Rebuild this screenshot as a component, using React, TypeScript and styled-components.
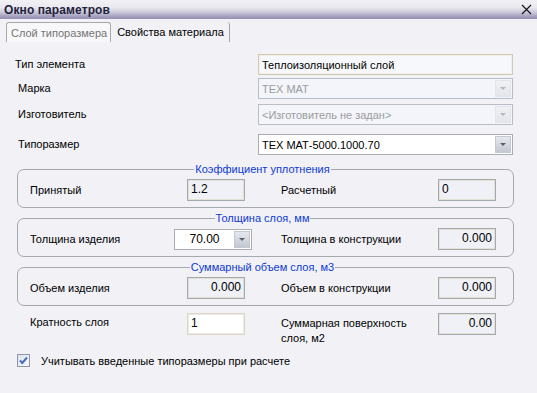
import styled, { createGlobalStyle } from "styled-components";

const GlobalStyle = createGlobalStyle`
  html, body {
    margin: 0;
    padding: 0;
  }
  body {
    background: #f1f1f6;
    font-family: "Liberation Sans", Arial, sans-serif;
    font-size: 11px;
    color: #000000;
  }
`;

type FieldKind = "name" | "disabled" | "combo" | "readonly" | "edit";

const App = () => {
  return (
    <SWindow>
      <GlobalStyle />
      <STitleBar>
        <STitle>Окно параметров</STitle>
        <SClose width="11" height="11" viewBox="0 0 11 11">
          <path d="M1 1 L10 10 M10 1 L1 10" stroke="#111" strokeWidth="1.1" />
        </SClose>
      </STitleBar>

      <STabs>
        <STab $active>Слой типоразмера</STab>
        <STab>Свойства материала</STab>
      </STabs>

      <SContent>
        <SFormRow $top={0}>
          <SLabel $indent={0}>Тип элемента</SLabel>
          <SField $kind="name">Теплоизоляционный слой</SField>
        </SFormRow>
        <SFormRow $top={3}>
          <SLabel $indent={3}>Марка</SLabel>
          <Combo kind="disabled" value="ТЕХ МАТ" />
        </SFormRow>
        <SFormRow $top={5}>
          <SLabel $indent={3}>Изготовитель</SLabel>
          <Combo kind="disabled" value="<Изготовитель не задан>" />
        </SFormRow>
        <SFormRow $top={9}>
          <SLabel $indent={3}>Типоразмер</SLabel>
          <Combo kind="combo" value="ТЕХ МАТ-5000.1000.70" />
        </SFormRow>

        <SGroup $top={8}>
          <SLegend>Коэффициент уплотнения</SLegend>
          <SGrid>
            <SCellLabel>Принятый</SCellLabel>
            <SSmallField $kind="readonly" $align="left">1.2</SSmallField>
            <SCellLabel>Расчетный</SCellLabel>
            <SSmallField $kind="readonly" $align="left">0</SSmallField>
          </SGrid>
        </SGroup>

        <SGroup $top={4}>
          <SLegend>Толщина слоя, мм</SLegend>
          <SGrid>
            <SCellLabel>Толщина изделия</SCellLabel>
            <SThickCombo>
              <SComboText $center>70.00</SComboText>
              <SComboButton $kind="combo">
                <SArrow $kind="combo" />
              </SComboButton>
            </SThickCombo>
            <SCellLabel>Толщина в конструкции</SCellLabel>
            <SSmallField $kind="readonly" $align="right">0.000</SSmallField>
          </SGrid>
        </SGroup>

        <SGroup $top={4}>
          <SLegend>Суммарный объем слоя, м3</SLegend>
          <SGrid>
            <SCellLabel>Объем изделия</SCellLabel>
            <SSmallField $kind="readonly" $align="right">0.000</SSmallField>
            <SCellLabel>Объем в конструкции</SCellLabel>
            <SSmallField $kind="readonly" $align="right">0.000</SSmallField>
          </SGrid>
        </SGroup>

        <SLooseGrid>
          <SCellLabel>Кратность слоя</SCellLabel>
          <SSmallField $kind="edit" $align="left">1</SSmallField>
          <STwoLineLabel>
            Суммарная поверхность
            <br />
            слоя, м2
          </STwoLineLabel>
          <SSmallField $kind="readonly" $align="right">0.00</SSmallField>
        </SLooseGrid>

        <SCheckRow>
          <SCheckBox>
            <svg width="11" height="11" viewBox="0 0 11 11">
              <path
                d="M2 5.5 L4.3 8 L9 2.5"
                stroke="#4a6cbd"
                strokeWidth="2"
                fill="none"
              />
            </svg>
          </SCheckBox>
          <span>Учитывать введенные типоразмеры при расчете</span>
        </SCheckRow>
      </SContent>
    </SWindow>
  );
};

const Combo = ({ kind, value }: { kind: FieldKind; value: string }) => (
  <SField $kind={kind}>
    <SComboText>{value}</SComboText>
    <SComboButton $kind={kind}>
      <SArrow $kind={kind} />
    </SComboButton>
  </SField>
);

export default App;

const fieldLook = (kind: FieldKind) => {
  switch (kind) {
    case "name":
      return "border: 1px solid #cfcab2; background: #f7f8fb; box-shadow: inset 0 0 0 1px #f0efe8;";
    case "disabled":
      return "border: 1px solid #b9bdc5; background: #f3f5fb; color: #9c9c9c;";
    case "combo":
      return "border: 1px solid #a9adb5; background: #ffffff;";
    case "readonly":
      return "border: 1px solid #a4a9b0; background: #eff1f7; box-shadow: inset 0 0 0 1px #e3e1d4;";
    case "edit":
      return "border: 1px solid #dcd8c2; background: #ffffff; box-shadow: inset 0 0 0 1px #e9e9e9;";
  }
};

const SWindow = styled.div`
  width: 537px;
  height: 393px;
  display: flex;
  flex-direction: column;
  background: #f1f1f6;
  overflow: hidden;
`;

const STitleBar = styled.div`
  height: 19px;
  flex-shrink: 0;
  display: flex;
  align-items: center;
  justify-content: space-between;
  padding: 0 5px 0 4px;
  background: linear-gradient(
    #f1f1f5 0%,
    #e8e8ef 40%,
    #c9c7d8 65%,
    #a6a3c0 85%,
    #928fb0 100%
  );
`;

const STitle = styled.div`
  font-size: 12px;
  font-weight: bold;
  color: #23223c;
  letter-spacing: 0.1px;
`;

const SClose = styled.svg`
  display: block;
`;

const STabs = styled.div`
  display: flex;
  align-items: flex-end;
  height: 21px;
  margin-top: 2px;
  padding-left: 6px;
`;

const STab = styled.div<{ $active?: boolean }>`
  height: 20px;
  box-sizing: border-box;
  display: flex;
  align-items: center;
  padding: 0 ${(p) => (p.$active ? "3px" : "5px")} 0 ${(p) => (p.$active ? "4px" : "6px")};
  color: ${(p) => (p.$active ? "#757575" : "#000000")};
  font-size: 11px;
  background: ${(p) => (p.$active ? "#f8f8fa" : "transparent")};
  border: ${(p) => (p.$active ? "1px solid #a9a8ae" : "none")};
  border-bottom: none;
  border-radius: 3px 3px 0 0;
  border-right: 1px solid ${(p) => (p.$active ? "#a9a8ae" : "#a2a2a6")};
`;

const SContent = styled.div`
  display: flex;
  flex-direction: column;
  padding: 12px 23px 0 15px;
`;

const SFormRow = styled.div<{ $top: number }>`
  display: grid;
  grid-template-columns: 243px 255px;
  align-items: center;
  margin-top: ${(p) => p.$top}px;
`;

const SLabel = styled.div<{ $indent: number }>`
  padding-left: ${(p) => p.$indent}px;
  padding-bottom: 2px;
`;

const SField = styled.div<{ $kind: FieldKind }>`
  height: 21px;
  box-sizing: border-box;
  display: flex;
  align-items: center;
  padding-left: 3px;
  ${(p) => fieldLook(p.$kind)}
`;

const SComboText = styled.div<{ $center?: boolean }>`
  flex: 1;
  text-align: ${(p) => (p.$center ? "center" : "left")};
  white-space: nowrap;
`;

const SComboButton = styled.div<{ $kind: FieldKind }>`
  width: 16px;
  height: 17px;
  margin-right: 1px;
  display: flex;
  align-items: center;
  justify-content: center;
  box-sizing: border-box;
  border: 1px solid ${(p) => (p.$kind === "disabled" ? "#e2e4ea" : "#c4c8d0")};
  background: ${(p) =>
    p.$kind === "disabled"
      ? "linear-gradient(#f0f1f5, #e3e5ea)"
      : "linear-gradient(#e6e8ee, #c3c7d0)"};
`;

const SArrow = styled.div<{ $kind: FieldKind }>`
  width: 0;
  height: 0;
  border-left: 3px solid transparent;
  border-right: 3px solid transparent;
  border-top: 3px solid
    ${(p) => (p.$kind === "disabled" ? "#b4b7be" : "#5c606c")};
`;

const SGroup = styled.fieldset<{ $top: number }>`
  margin: ${(p) => p.$top}px 0 0 2px;
  padding: 3px 17px 6px 11px;
  border: 1px solid #a4a8af;
  border-radius: 7px;
  min-width: 0;
`;

const SLegend = styled.legend`
  margin: 0 auto;
  padding: 0 1px;
  line-height: 13px;
  color: #0d3ad6;
`;

const SGrid = styled.div`
  display: grid;
  grid-template-columns: 158px 93px 158px 58px;
  align-items: center;
  min-height: 22px;
`;

const SLooseGrid = styled(SGrid)`
  align-items: start;
  margin-top: 7px;
  padding-left: 14px;

  & > div:nth-child(1) {
    padding-top: 3px;
  }
`;

const SCellLabel = styled.div`
  padding-left: 1px;
  padding-bottom: 1px;
`;

const STwoLineLabel = styled.div`
  padding: 3px 0 0 1px;
  line-height: 15px;
`;

const SSmallField = styled.div<{ $kind: FieldKind; $align: "left" | "right" }>`
  width: 58px;
  height: 22px;
  box-sizing: border-box;
  display: flex;
  align-items: center;
  justify-content: ${(p) => (p.$align === "right" ? "flex-end" : "flex-start")};
  padding: 0 3px 2px 3px;
  font-size: 12px;
  ${(p) => fieldLook(p.$kind)}
`;

const SThickCombo = styled.div`
  width: 78px;
  height: 21px;
  margin-left: -13px;
  box-sizing: border-box;
  display: flex;
  align-items: center;
  font-size: 12px;
  ${fieldLook("combo")}
`;

const SCheckRow = styled.div`
  display: flex;
  align-items: center;
  gap: 11px;
  margin-top: 8px;
  padding-left: 2px;
`;

const SCheckBox = styled.div`
  width: 13px;
  height: 13px;
  box-sizing: border-box;
  border: 1px solid #8d96ab;
  background: linear-gradient(135deg, #dfe2ea, #f9f9fb);
  display: flex;
  align-items: center;
  justify-content: center;
`;
